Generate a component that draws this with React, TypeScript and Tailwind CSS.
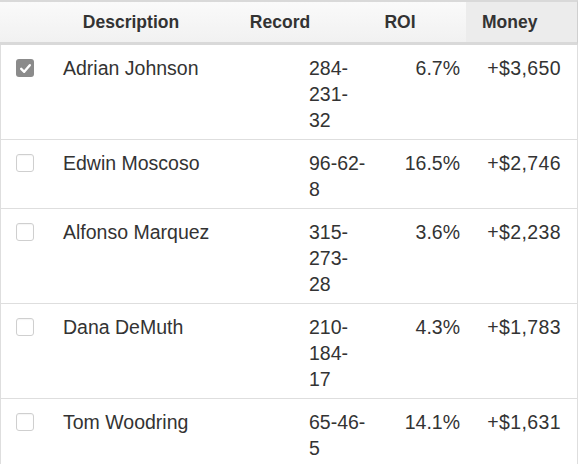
import React from "react";

type Row = { name: string; record: string; roi: string; money: string; checked?: boolean };

const rows: Row[] = [
  { name: "Adrian Johnson", record: "284-231-32", roi: "6.7%", money: "+$3,650", checked: true },
  { name: "Edwin Moscoso", record: "96-62-8", roi: "16.5%", money: "+$2,746" },
  { name: "Alfonso Marquez", record: "315-273-28", roi: "3.6%", money: "+$2,238" },
  { name: "Dana DeMuth", record: "210-184-17", roi: "4.3%", money: "+$1,783" },
  { name: "Tom Woodring", record: "65-46-5", roi: "14.1%", money: "+$1,631" },
];

function Checkbox({ checked }: { checked?: boolean }) {
  if (checked) {
    return (
      <div className="w-[18px] h-[18px] rounded-[3px] bg-[#8b8b8b] flex items-center justify-center">
        <svg width="13" height="13" viewBox="0 0 13 13">
          <path d="M2.2 6.8 L5.2 9.8 L10.8 3.2" fill="none" stroke="#ffffff" strokeWidth="2.4" strokeLinecap="round" strokeLinejoin="round" />
        </svg>
      </div>
    );
  }
  return <div className="w-[18px] h-[18px] rounded-[3px] border border-[#cfcfcf] bg-white shadow-[inset_0_1px_1px_rgba(0,0,0,0.04)]" />;
}

export default function App() {
  return (
    <div className="w-[580px] h-[464px] bg-white overflow-hidden text-[#333]" style={{ fontFamily: '"Liberation Sans", Arial, Helvetica, sans-serif' }}>
      <div className="w-[578px]">
        <div className="border-t-2 border-b-[3px] border-[#d9d9d9] flex h-[45px] bg-gradient-to-b from-[#fafafa] to-[#f1f1f1] font-bold text-[17.5px] border-r border-r-[#cfcfcf]">
          <div className="w-[48px]" />
          <div className="w-[166px] flex items-center justify-center">Description</div>
          <div className="w-[132px] flex items-center justify-center">Record</div>
          <div className="w-[120px] pr-3 flex items-center justify-center">ROI</div>
          <div className="flex-1 flex items-center pl-4 bg-[#ececec]">Money</div>
        </div>
        {rows.map((r, i) => (
          <div key={i} className="flex border-l border-r border-b border-[#dedede] text-[19.5px] leading-[26px] pt-[10px] pb-[6px]">
            <div className="w-[47px] pl-[15px] pt-[4px]">
              <Checkbox checked={r.checked} />
            </div>
            <div className="w-[261px] pl-[15px]">{r.name}</div>
            <div className="w-[57px] break-words">{r.record}</div>
            <div className="w-[100px] text-right pr-[6px]">{r.roi}</div>
            <div className="flex-1 text-right pr-[16px] tracking-[0.4px]">{r.money}</div>
          </div>
        ))}
      </div>
    </div>
  );
}
